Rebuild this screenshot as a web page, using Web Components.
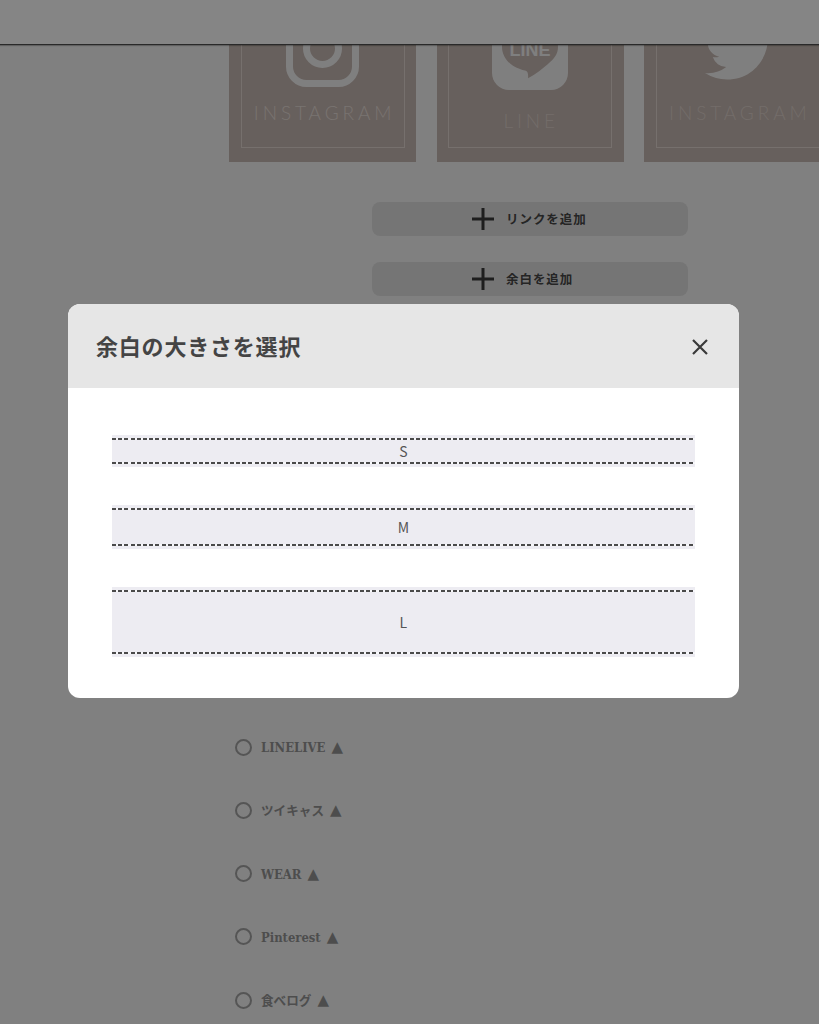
<!DOCTYPE html>
<html lang="ja">
<head>
<meta charset="utf-8">
<title>余白の大きさを選択</title>
<style>
  html, body { margin: 0; padding: 0; }
  body { background: #f6f6f6; width: 819px; height: 1024px; overflow: hidden; font-family: "Noto Sans CJK JP", sans-serif; }
  .cards { display: flex; gap: 20.3px; margin: -71px 0 0 229px; width: 590px; overflow: hidden; }
  .adds { display: flex; flex-direction: column; gap: 26px; width: 316px; margin: 40px 0 0 372px; }
  .sns { display: flex; flex-direction: column; gap: 43.3px; margin: 441.5px 0 0 235px; }
  svg.icon { display: block; fill: none; }
</style>
</head>
<body>

<template id="app-header">
  <style>
    :host { display: block; position: relative; z-index: 1; height: 44px; background: #fff; border-bottom: 1px solid #505050; box-shadow: 0 1px 1px rgba(0, 0, 0, .25); }
  </style>
</template>

<template id="social-card">
  <style>
    :host { display: block; flex: none; box-sizing: border-box; width: 187.3px; height: 187.5px; padding: 14px 11.6px; background: #c6b8b2; }
    .inner { box-sizing: border-box; height: 100%; border: 1px solid #e2d6d1; display: flex; flex-direction: column; align-items: center; padding-top: 25px; }
    .label { font: 300 19px/22px Lato, sans-serif; letter-spacing: 3.9px; margin-right: var(--shift, -4px); color: var(--label, #e6ddd8); white-space: nowrap; }
  </style>
  <div class="inner">
    <slot></slot>
    <div class="label" id="label"></div>
  </div>
</template>

<template id="add-button">
  <style>
    :host { display: block; height: 34px; border-radius: 8px; background: #e1e1e1; color: #484848; }
    .row { height: 100%; box-sizing: border-box; padding-left: 100px; display: flex; align-items: center; gap: 12px; font: 700 12.5px/1 "Noto Sans CJK JP", sans-serif; letter-spacing: .95px; }
    span { padding-top: 2px; }
    svg { display: block; width: 22px; height: 22px; }
  </style>
  <div class="row">
    <svg viewBox="0 0 22 22"><path d="M0 11H22M11 0V22" stroke="#3a3a3a" stroke-width="3"/></svg>
    <span><slot></slot></span>
  </div>
</template>

<template id="sns-radio">
  <style>
    :host { display: flex; align-items: center; gap: 9px; height: 20px; color: #959595; font: 700 12.9px/20px "DejaVu Serif Condensed", "DejaVu Serif", "Noto Sans CJK JP", serif; font-stretch: condensed; }
    .dot { box-sizing: border-box; width: 17px; height: 17px; border: 2px solid #a3a3a3; border-radius: 50%; flex: none; }
    .text { padding-top: 2px; }
    .tri { font: 15px/20px "DejaVu Sans", sans-serif; margin-left: -3px; }
  </style>
  <span class="dot"></span>
  <span class="text"><slot></slot></span>
  <span class="tri">▲</span>
</template>

<template id="size-option">
  <style>
    :host { display: block; padding: 3px 0; background: #edecf2; }
    .line {
      --dash: repeating-linear-gradient(90deg, #4a4a4a 0 4px, #f7f7fa 4px 6.2px);
      display: flex; align-items: center; justify-content: center; box-sizing: border-box;
      height: var(--h, 26px);
      background: var(--dash) top / 100% 2px no-repeat, var(--dash) bottom / 100% 2px no-repeat;
      font: 400 14px/1 "Noto Sans CJK JP", sans-serif; color: #555; letter-spacing: .3px;
    }
  </style>
  <div class="line"><slot></slot></div>
</template>

<template id="size-dialog">
  <style>
    :host { display: flex; align-items: flex-start; position: fixed; inset: 0; z-index: 2; box-sizing: border-box; padding: 304px 0 0 68px; background: rgba(0, 0, 0, .48); }
    .box { width: 671px; border-radius: 12px; overflow: hidden; background: #fff; }
    .head { display: flex; align-items: center; justify-content: space-between; height: 84px; box-sizing: border-box; padding: 0 31px 0 28px; background: #e6e6e6; }
    h2 { margin: 0 0 2px; font: 700 22px/1 "Noto Sans CJK JP", sans-serif; letter-spacing: .8px; color: #444; }
    svg { display: block; width: 16px; height: 16px; margin-top: 2px; }
    .body { display: flex; flex-direction: column; gap: 38px; padding: 47px 44px 41px; }
  </style>
  <div class="box">
    <div class="head">
      <h2><slot name="title"></slot></h2>
      <svg viewBox="0 0 16 16"><path d="M1 1L15 15M15 1L1 15" stroke="#3a3a3a" stroke-width="2.2"/></svg>
    </div>
    <div class="body"><slot></slot></div>
  </div>
</template>

<app-header></app-header>

<div class="cards">
  <social-card label="INSTAGRAM">
    <svg class="icon" width="73" height="73" viewBox="0 0 73 73" style="margin-bottom:15px">
      <rect x="3.5" y="3.5" width="66" height="66" rx="17" stroke="#f4f4f4" stroke-width="7"/>
      <circle cx="36.5" cy="34.5" r="16" stroke="#f4f4f4" stroke-width="7"/>
    </svg>
  </social-card>
  <social-card label="LINE" style="--label:#dcd0ca;--shift:-2px">
    <svg class="icon" width="76" height="76" viewBox="0 0 76 76" style="margin-bottom:20px">
      <rect width="76" height="76" rx="17" fill="#f4f4f4"/>
      <path d="M38 6C22 6 10 16 10 33C10 41 15 48 21 51.7C25 54 30 56 33 56.5C35.5 57 36.5 59 36 64.3C44 60 50 55 56 50C62 45 66 40 66 33C66 16 54 6 38 6Z" fill="#c6b8b2"/>
      <text x="38" y="41.7" text-anchor="middle" fill="#f4f4f4" font-family="Liberation Sans, sans-serif" font-weight="700" font-size="18">LINE</text>
    </svg>
  </social-card>
  <social-card label="INSTAGRAM" style="--label:#dcd0ca">
    <svg class="icon" width="70" height="70" viewBox="0 0 24 24" style="margin:1.6px 0 16.4px 5px;fill:#f4f4f4">
      <path d="M23.953 4.57a10 10 0 01-2.825.775 4.958 4.958 0 002.163-2.723c-.951.555-2.005.959-3.127 1.184a4.92 4.92 0 00-8.384 4.482C7.69 8.095 4.067 6.13 1.64 3.162a4.822 4.822 0 00-.666 2.475c0 1.71.87 3.213 2.188 4.096a4.904 4.904 0 01-2.228-.616v.06a4.923 4.923 0 003.946 4.827 4.996 4.996 0 01-2.212.085 4.936 4.936 0 004.604 3.417 9.867 9.867 0 01-6.102 2.105c-.39 0-.779-.023-1.17-.067a13.995 13.995 0 007.557 2.209c9.053 0 13.998-7.496 13.998-13.985 0-.21 0-.42-.015-.63A9.935 9.935 0 0024 4.59z"/>
    </svg>
  </social-card>
</div>

<div class="adds">
  <add-button>リンクを追加</add-button>
  <add-button>余白を追加</add-button>
</div>

<div class="sns">
  <sns-radio>LINELIVE</sns-radio>
  <sns-radio style="font-size:12.6px">ツイキャス</sns-radio>
  <sns-radio>WEAR</sns-radio>
  <sns-radio>Pinterest</sns-radio>
  <sns-radio style="font-size:12.6px">食べログ</sns-radio>
</div>

<size-dialog>
  <span slot="title">余白の大きさを選択</span>
  <size-option style="--h:26px">S</size-option>
  <size-option style="--h:38px">M</size-option>
  <size-option style="--h:64px">L</size-option>
</size-dialog>

<script>
  const define = (name, setup) => {
    customElements.define(name, class extends HTMLElement {
      constructor () {
        super()
        let template = document.querySelector('template#' + name)
        this.attachShadow({ mode: 'open' }).appendChild(template.content.cloneNode(true))
      }
      connectedCallback () {
        if (setup) setup(this)
      }
    })
  }
  define('app-header')
  define('social-card', el => {
    el.shadowRoot.querySelector('#label').textContent = el.getAttribute('label')
  })
  define('add-button')
  define('sns-radio')
  define('size-option')
  define('size-dialog')
</script>
</body>
</html>
